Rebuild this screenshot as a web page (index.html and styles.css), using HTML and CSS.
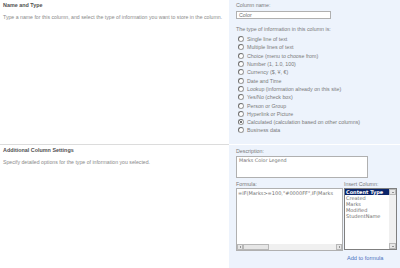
FILE: index.html
```html
<!DOCTYPE html>
<html lang="en">
  <head>
    <meta charset="utf-8">
    <title>Create Column</title>
    <link rel="stylesheet" href="styles.css">
  </head>
  <body>
    <div class="section first">
      <div class="info">
        <h3>Name and Type</h3>
        <p>Type a name for this column, and select the type of information you want to store in the column.</p>
      </div>
      <div class="controls">
        <div class="label">Column name:</div>
        <div class="textbox">Color</div>
        <div class="label typeLabel">The type of information in this column is:</div>
        <div class="radios">
          <div class="radio"><span class="dot"></span>Single line of text</div>
          <div class="radio"><span class="dot"></span>Multiple lines of text</div>
          <div class="radio"><span class="dot"></span>Choice (menu to choose from)</div>
          <div class="radio"><span class="dot"></span>Number (1, 1.0, 100)</div>
          <div class="radio"><span class="dot"></span>Currency ($, ¥, €)</div>
          <div class="radio"><span class="dot"></span>Date and Time</div>
          <div class="radio"><span class="dot"></span>Lookup (information already on this site)</div>
          <div class="radio"><span class="dot"></span>Yes/No (check box)</div>
          <div class="radio"><span class="dot"></span>Person or Group</div>
          <div class="radio"><span class="dot"></span>Hyperlink or Picture</div>
          <div class="radio"><span class="dot checked"></span>Calculated (calculation based on other columns)</div>
          <div class="radio"><span class="dot"></span>Business data</div>
        </div>
      </div>
    </div>
    <div class="section second">
      <div class="info">
        <h3>Additional Column Settings</h3>
        <p>Specify detailed options for the type of information you selected.</p>
      </div>
      <div class="controls">
        <div class="label">Description:</div>
        <div class="descBox">Marks Color Legend</div>
        <div class="formulaRow">
          <div class="formulaCol">
            <div class="label">Formula:</div>
            <div class="formulaBox">
              <div class="formulaText">=IF(Marks&gt;=100,"#0000FF",IF(Marks</div>
              <div class="hscroll">
                <span class="arrowBtn"><i class="tri left"></i></span>
                <span class="thumb"></span>
                <span class="track"></span>
                <span class="arrowBtn"><i class="tri right"></i></span>
              </div>
            </div>
          </div>
          <div class="insertCol">
            <div class="label">Insert Column:</div>
            <div class="listBox">
              <div class="items">
                <div class="item selected">Content Type</div>
                <div class="item">Created</div>
                <div class="item">Marks</div>
                <div class="item">Modified</div>
                <div class="item">StudentName</div>
              </div>
              <div class="vscroll">
                <span class="arrowBtn"><i class="tri up"></i></span>
                <span class="track"></span>
                <span class="arrowBtn"><i class="tri down"></i></span>
              </div>
            </div>
            <a class="addLink">Add to formula</a>
          </div>
        </div>
      </div>
    </div>
  </body>
</html>
```

FILE: styles.css
```css
body {
  margin: 0;
  background-color: #ffffff;
  font-family: "Liberation Sans", Arial, sans-serif;
  font-size: 5.3px;
  color: #7a7a7a;
}
.section {
  display: flex;
  flex-direction: row;
}
.first {
  height: 144px;
  border-bottom: 1px solid #dcdcdc;
}
.second {
  height: 123px;
}
.info {
  width: 229px;
  padding-left: 3px;
  box-sizing: border-box;
}
.info h3 {
  margin: 2px 0 0 0;
  font-size: 5.4px;
  font-weight: bold;
  color: #505050;
  line-height: 6px;
}
.info p {
  margin: 6px 0 0 0;
  line-height: 6px;
  font-size: 5.2px;
  color: #8a8a8a;
  white-space: nowrap;
}
.controls {
  flex: 1;
  background-color: #edf3fc;
  padding-left: 7px;
  display: flex;
  flex-direction: column;
}
.second .controls {
  border-top: 1px solid #ffffff;
  margin-top: -1px;
}
.label {
  line-height: 6px;
  color: #7a7a7a;
}
.first .label {
  margin-top: 2px;
}
.textbox {
  width: 95px;
  height: 8px;
  box-sizing: border-box;
  margin-top: 3px;
  border: 1px solid #b0b0b0;
  background: #ffffff;
  line-height: 6px;
  padding-left: 2px;
  color: #707070;
}
.first .typeLabel {
  margin-top: 7px;
}
.radios {
  margin-top: 3px;
  display: flex;
  flex-direction: column;
}
.radio {
  display: flex;
  align-items: center;
  height: 8.3px;
  padding-left: 2px;
  color: #7a7a7a;
}
.dot {
  width: 4px;
  height: 4px;
  border: 1px solid #a0a0a0;
  border-left-color: #707070;
  border-top-color: #707070;
  border-radius: 50%;
  background: #ffffff;
  margin-right: 3px;
  position: relative;
}
.dot.checked::after {
  content: "";
  position: absolute;
  left: 1px;
  top: 1px;
  width: 2px;
  height: 2px;
  border-radius: 50%;
  background: #444444;
}
.second .label {
  margin-top: 3px;
}
.descBox {
  width: 132px;
  height: 22px;
  box-sizing: border-box;
  margin-top: 2px;
  border: 1px solid #b0b0b0;
  background: #ffffff;
  padding: 1px 2px;
  line-height: 6px;
  font-family: "DejaVu Sans", Verdana, sans-serif;
  font-size: 4.8px;
  color: #707070;
}
.formulaRow {
  display: flex;
  flex-direction: row;
}
.formulaCol {
  width: 108px;
}
.formulaBox {
  width: 107px;
  height: 63px;
  box-sizing: border-box;
  margin-top: 1px;
  border: 1px solid #b0b0b0;
  background: #ffffff;
  display: flex;
  flex-direction: column;
  overflow: hidden;
}
.formulaText {
  flex: 1;
  padding: 1px 1px;
  line-height: 6px;
  white-space: nowrap;
  font-family: "DejaVu Sans", Verdana, sans-serif;
  font-size: 5px;
  color: #707070;
}
.hscroll {
  display: flex;
  flex-direction: row;
  height: 6px;
  background: #f0f0f0;
}
.arrowBtn {
  width: 6px;
  height: 6px;
  box-sizing: border-box;
  border: 1px solid #b8b8b8;
  background: #e6e6e6;
  display: flex;
  align-items: center;
  justify-content: center;
}
.tri {
  width: 0;
  height: 0;
  border: 1.5px solid transparent;
}
.tri.left {
  border-right-color: #444444;
  border-left-width: 0;
}
.tri.right {
  border-left-color: #444444;
  border-right-width: 0;
}
.tri.up {
  border-bottom-color: #444444;
  border-top-width: 0;
}
.tri.down {
  border-top-color: #444444;
  border-bottom-width: 0;
}
.hscroll .thumb {
  width: 26px;
  border: 1px solid #b8b8b8;
  background: #e6e6e6;
  box-sizing: border-box;
}
.track {
  flex: 1;
}
.insertCol {
  width: 53px;
}
.listBox {
  width: 53px;
  height: 62px;
  box-sizing: border-box;
  margin-top: 1px;
  border: 1px solid #7f7f7f;
  background: #ffffff;
  display: flex;
  flex-direction: row;
}
.items {
  flex: 1;
  overflow: hidden;
  font-family: "DejaVu Sans", Verdana, sans-serif;
  font-size: 5px;
  color: #707070;
}
.item {
  height: 6px;
  line-height: 6px;
  padding-left: 1px;
  white-space: nowrap;
}
.item.selected {
  background: #0a246a;
  color: #ffffff;
  font-weight: bold;
}
.vscroll {
  width: 7px;
  display: flex;
  flex-direction: column;
  background: #f0f0f0;
}
.vscroll .arrowBtn {
  width: 7px;
}
.addLink {
  display: block;
  margin-top: 5px;
  padding-left: 3px;
  color: #4a72c0;
  line-height: 6px;
  font-size: 5.6px;
}
```
